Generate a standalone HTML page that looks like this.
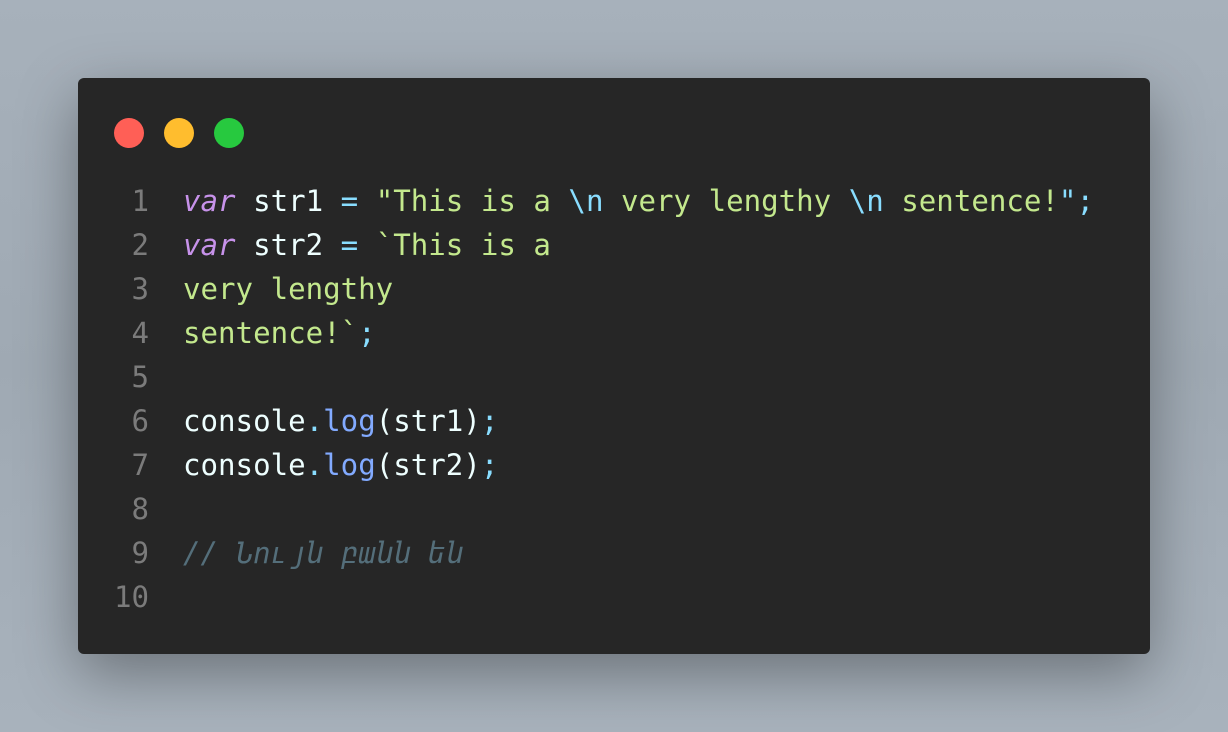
<!DOCTYPE html>
<html><head><meta charset="utf-8"><style>
html,body{margin:0;padding:0}
body{width:1228px;height:732px;overflow:hidden;background:linear-gradient(180deg,#a7b1bb 0%,#9fa9b3 50%,#a8b2bc 100%);position:relative;font-family:"DejaVu Sans Mono","Liberation Mono",monospace}
.win{position:absolute;left:78px;top:78px;width:1072px;height:576px;background:#262626;border-radius:6px;box-shadow:0 20px 60px rgba(0,0,0,0.35)}
.dot{position:absolute;top:40px;width:30px;height:30px;border-radius:50%}
.code{position:absolute;left:0;top:101px;font-size:29.1px;line-height:44px;white-space:pre;color:#eeffff}
.ln{position:absolute;left:0;width:71px;text-align:right;color:#7b7b7b}
.tx{position:absolute;left:105px}
.k{color:#c792ea;font-style:italic}.s{color:#c3e88d}.o{color:#89ddff}.f{color:#82aaff}.c{color:#546e7a;font-style:italic}
</style></head><body>
<div class="win">
<div class="dot" style="left:36px;background:#ff5f56"></div>
<div class="dot" style="left:86px;background:#ffbd2e"></div>
<div class="dot" style="left:136px;background:#27c93f"></div>
<div class="code">
<div class="ln" style="top:0">1</div><div class="tx" style="top:0"><span class="k">var</span> str1 <span class="o">=</span> <span class="s">"This is a </span><span class="o">\n</span><span class="s"> very lengthy </span><span class="o">\n</span><span class="s"> sentence!</span><span class="o">";</span></div>
<div class="ln" style="top:44px">2</div><div class="tx" style="top:44px"><span class="k">var</span> str2 <span class="o">=</span> <span class="s">`This is a</span></div>
<div class="ln" style="top:88px">3</div><div class="tx s" style="top:88px">very lengthy</div>
<div class="ln" style="top:132px">4</div><div class="tx" style="top:132px"><span class="s">sentence!`</span><span class="o">;</span></div>
<div class="ln" style="top:176px">5</div>
<div class="ln" style="top:220px">6</div><div class="tx" style="top:220px">console<span class="o">.</span><span class="f">log</span>(str1)<span class="o">;</span></div>
<div class="ln" style="top:264px">7</div><div class="tx" style="top:264px">console<span class="o">.</span><span class="f">log</span>(str2)<span class="o">;</span></div>
<div class="ln" style="top:308px">8</div>
<div class="ln" style="top:352px">9</div><div class="tx c" style="top:352px">// Նույն բանն են</div>
<div class="ln" style="top:396px">10</div>
</div>
</div>
</body></html>
